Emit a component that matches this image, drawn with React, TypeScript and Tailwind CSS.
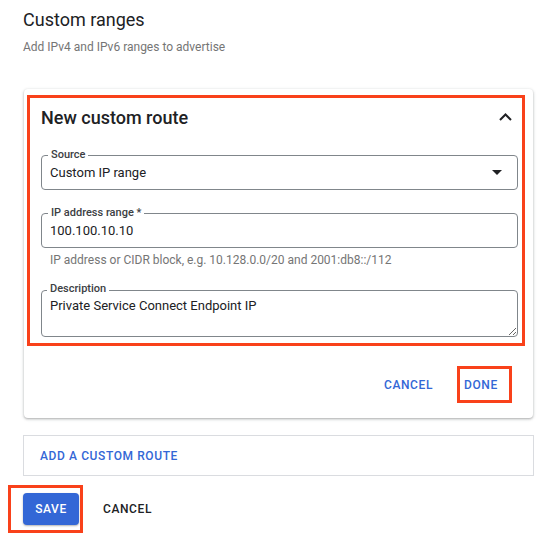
import React from "react";

const font = { fontFamily: "Roboto, 'Noto Sans', Arial, sans-serif" };

function Outlined({ label, children, className }: { label: string; children: React.ReactNode; className?: string }) {
  return (
    <div className={"relative border border-[#80868b] rounded-[4px] " + (className || "")}>
      <span className="absolute -top-[8px] left-[6px] bg-white px-[3px] text-[11px] leading-[14px] font-medium text-[#3c4043]">
        {label}
      </span>
      {children}
    </div>
  );
}

export default function App() {
  return (
    <div style={font} className="min-h-screen bg-white px-[23px] text-[#202124]">
      <h1 className="pt-[8px] text-[18px] leading-[24px]">Custom ranges</h1>
      <p className="mt-[7px] text-[12px] leading-[16px] text-[#757575]">Add IPv4 and IPv6 ranges to advertise</p>

      {/* card */}
      <div className="mt-[34px] ml-[1px] w-[509px] rounded-[4px] bg-white shadow-[0_1px_2px_rgba(60,64,67,0.3),0_1px_3px_1px_rgba(60,64,67,0.12)] pt-[6px]">
        <div className="ml-[3px] w-[498px] border-[3px] border-[#f9411a] pl-[11px] pr-[4px] pb-[6px]">
          <div className="flex h-[38px] items-center justify-between pr-[6px]">
            <span className="text-[18px] font-medium">New custom route</span>
            <svg width="13" height="8" viewBox="0 0 13 8" fill="none">
              <path d="M1 7L6.5 1.5L12 7" stroke="#202124" strokeWidth="2" />
            </svg>
          </div>

          <Outlined label="Source" className="mt-[19px] h-[35px] flex items-center justify-between pl-[8px] pr-[15px]">
            <span className="text-[13px]">Custom IP range</span>
            <svg width="10" height="5" viewBox="0 0 10 5">
              <polygon points="0,0 10,0 5,5" fill="#202124" />
            </svg>
          </Outlined>

          <Outlined label="IP address range *" className="mt-[23px] h-[35px] flex items-center pl-[8px]">
            <span className="text-[13px]">100.100.10.10</span>
          </Outlined>
          <p className="mt-[5px] pl-[9px] text-[12px] leading-[14px] text-[#757575]">
            IP address or CIDR block, e.g. 10.128.0.0/20 and 2001:db8::/112
          </p>

          <div className="relative mt-[23px]">
            <span className="absolute -top-[8px] left-[6px] z-10 bg-white px-[3px] text-[11px] leading-[14px] font-medium text-[#3c4043]">
              Description
            </span>
            <textarea
              defaultValue="Private Service Connect Endpoint IP"
              className="block h-[47px] w-full rounded-[4px] border border-[#80868b] pl-[8px] pt-[7px] text-[13px] leading-[16px] text-[#202124] outline-none"
            />
          </div>
        </div>

        <div className="flex items-center justify-end pt-[20px] pb-[15px] pr-[21px]">
          <span className="text-[12px] font-medium tracking-[0.6px] text-[#3367d6]">CANCEL</span>
          <span className="ml-[24px] flex h-[37px] w-[55px] items-center border-[3px] border-[#f9411a] pl-[4px] text-[12px] font-medium tracking-[0.6px] text-[#3367d6]">
            DONE
          </span>
        </div>
      </div>

      <div className="mt-[17px] flex h-[41px] w-[511px] items-center border border-[#dadce0] pl-[16px]">
        <span className="text-[12px] font-medium tracking-[0.6px] text-[#3367d6]">ADD A CUSTOM ROUTE</span>
      </div>

      <div className="mt-[17px] flex items-center">
        <div className="relative">
          <span className="pointer-events-none absolute -left-[15px] -top-[8px] -bottom-[8px] -right-[4px] border-[3px] border-[#f9411a]" />
          <button className="flex h-[32px] w-[56px] items-center justify-center rounded-[4px] bg-[#3367d6] text-[12px] font-medium tracking-[0.6px] text-white shadow-[0_1px_2px_rgba(0,0,0,0.3)]">
            SAVE
          </button>
        </div>
        <span className="ml-[24px] text-[12px] font-medium tracking-[0.6px] text-[#202124]">CANCEL</span>
      </div>
    </div>
  );
}
